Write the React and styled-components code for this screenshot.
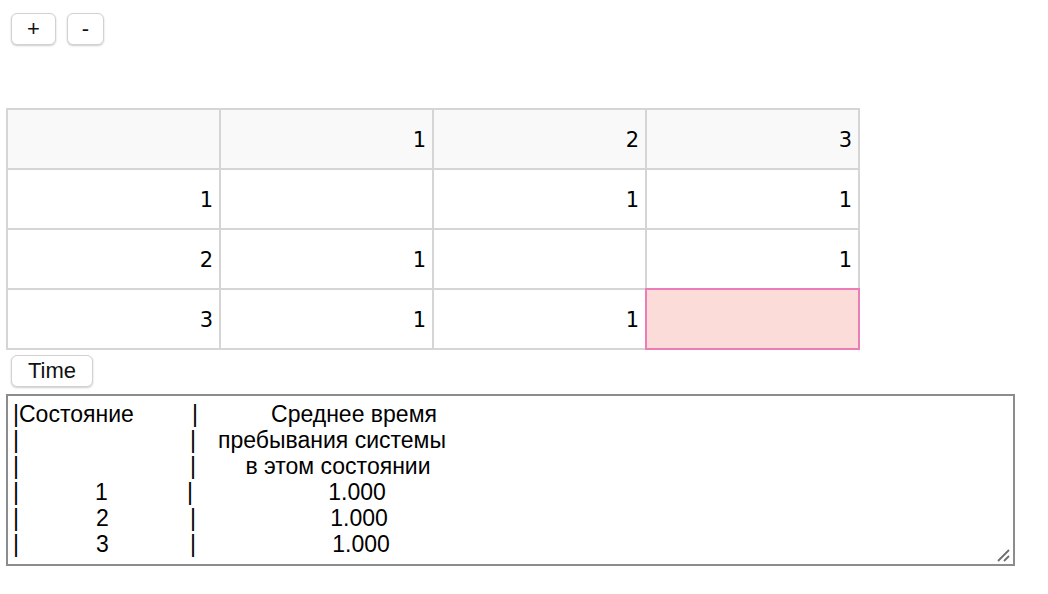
import React from "react";
import styled, { createGlobalStyle } from "styled-components";

const Global = createGlobalStyle`
  html, body { margin: 0; padding: 0; background: #fff; }
  body { font-family: "Liberation Sans", Arial, sans-serif; color: #000; }
`;

const Page = styled.div`
  display: flex;
  flex-direction: column;
  align-items: flex-start;
  padding: 13px 0 0 6px;
`;

const Toolbar = styled.div`
  display: flex;
  gap: 11px;
  padding-left: 5px;
  margin-bottom: 63px;
`;

const Button = styled.button`
  box-sizing: border-box;
  font-family: "Liberation Sans", Arial, sans-serif;
  font-size: 22px;
  line-height: 1;
  height: 32px;
  padding: 0 ${(p) => p.$pad || 15}px;
  background: #fff;
  color: #111;
  border: 1px solid #d2d2d2;
  border-radius: 6px;
  box-shadow: 0 1px 2px rgba(0, 0, 0, 0.2);
  display: flex;
  align-items: center;
  justify-content: center;
`;

const Grid = styled.div`
  display: grid;
  grid-template-columns: repeat(4, 211px);
  grid-auto-rows: 58px;
  gap: 2px;
  padding: 2px;
  background: #d5d5d5;
`;

const Cell = styled.div`
  position: relative;
  display: flex;
  align-items: center;
  justify-content: flex-end;
  padding: 2px 6px 0 0;
  font-family: "DejaVu Sans", Verdana, sans-serif;
  font-size: 21px;
  color: #000;
  background: ${(p) => (p.$selected ? "#fbdcd9" : p.$header ? "#f9f9f9" : "#fff")};
  outline: ${(p) => (p.$selected ? "2px solid #ec7db6" : "none")};
  z-index: ${(p) => (p.$selected ? 1 : 0)};
`;

const TimeRow = styled.div`
  padding: 5px 0 0 5px;
  margin-bottom: 7px;
`;

const OutputBox = styled.div`
  position: relative;
  box-sizing: border-box;
  width: 1009px;
  height: 172px;
  border: 2px solid #8c8c8c;
  padding: 5px 5px 4px;
  font-family: "Liberation Sans", Arial, sans-serif;
  font-size: 23px;
  line-height: 26px;
  color: #000;
  background: #fff;
`;

const Line = styled.div`
  display: grid;
  grid-template-columns: 4px 175px 4px 298px;
  white-space: pre;
`;

const Pipe = styled.span`
  margin-left: ${(p) => p.$shift || 0}px;
`;

const Col = styled.span`
  text-align: ${(p) => p.$align || "center"};
  padding-left: ${(p) => (p.$align === "left" ? 2 : Math.max(0, 2 * (p.$shift || 0)))}px;
  padding-right: ${(p) => Math.max(0, -2 * (p.$shift || 0))}px;
`;

const Grip = styled.svg`
  position: absolute;
  right: 3px;
  bottom: 2px;
`;

const header = ["", "1", "2", "3"];
const matrix = [
  ["1", "", "1", "1"],
  ["2", "1", "", "1"],
  ["3", "1", "1", ""],
];

const lines = [
  { a: "Состояние", align: "left", b: "Среднее время", bs: 9, ps: 0 },
  { a: "", b: "пребывания системы", bs: -13, ps: -2 },
  { a: "", b: "в этом состоянии", bs: -7, ps: -2 },
  { a: "1", b: "1.000", bs: 12, ps: -5, as: -3 },
  { a: "2", b: "1.000", bs: 14, ps: -2, as: -2 },
  { a: "3", b: "1.000", bs: 16, ps: -2, as: -2 },
];

export default function App() {
  return (
    <>
      <Global />
      <Page>
        <Toolbar>
          <Button>+</Button>
          <Button $pad={14}>-</Button>
        </Toolbar>
        <Grid>
          {header.map((h, i) => (
            <Cell key={"h" + i} $header>
              {h}
            </Cell>
          ))}
          {matrix.map((row, r) =>
            row.map((v, c) => (
              <Cell key={r + "-" + c} $selected={r === 2 && c === 3}>
                {v}
              </Cell>
            ))
          )}
        </Grid>
        <TimeRow>
          <Button $pad={16}>Time</Button>
        </TimeRow>
        <OutputBox>
          {lines.map((l, i) => (
            <Line key={i}>
              <Pipe>|</Pipe>
              <Col $align={l.align} $shift={l.as}>{l.a}</Col>
              <Pipe $shift={l.ps}>|</Pipe>
              <Col $shift={l.bs}>{l.b}</Col>
            </Line>
          ))}
          <Grip width="14" height="14" viewBox="0 0 14 14">
            <path d="M2 13 L13 2 M8 13 L13 8" stroke="#6f6f6f" strokeWidth="1.8" fill="none" />
          </Grip>
        </OutputBox>
      </Page>
    </>
  );
}
